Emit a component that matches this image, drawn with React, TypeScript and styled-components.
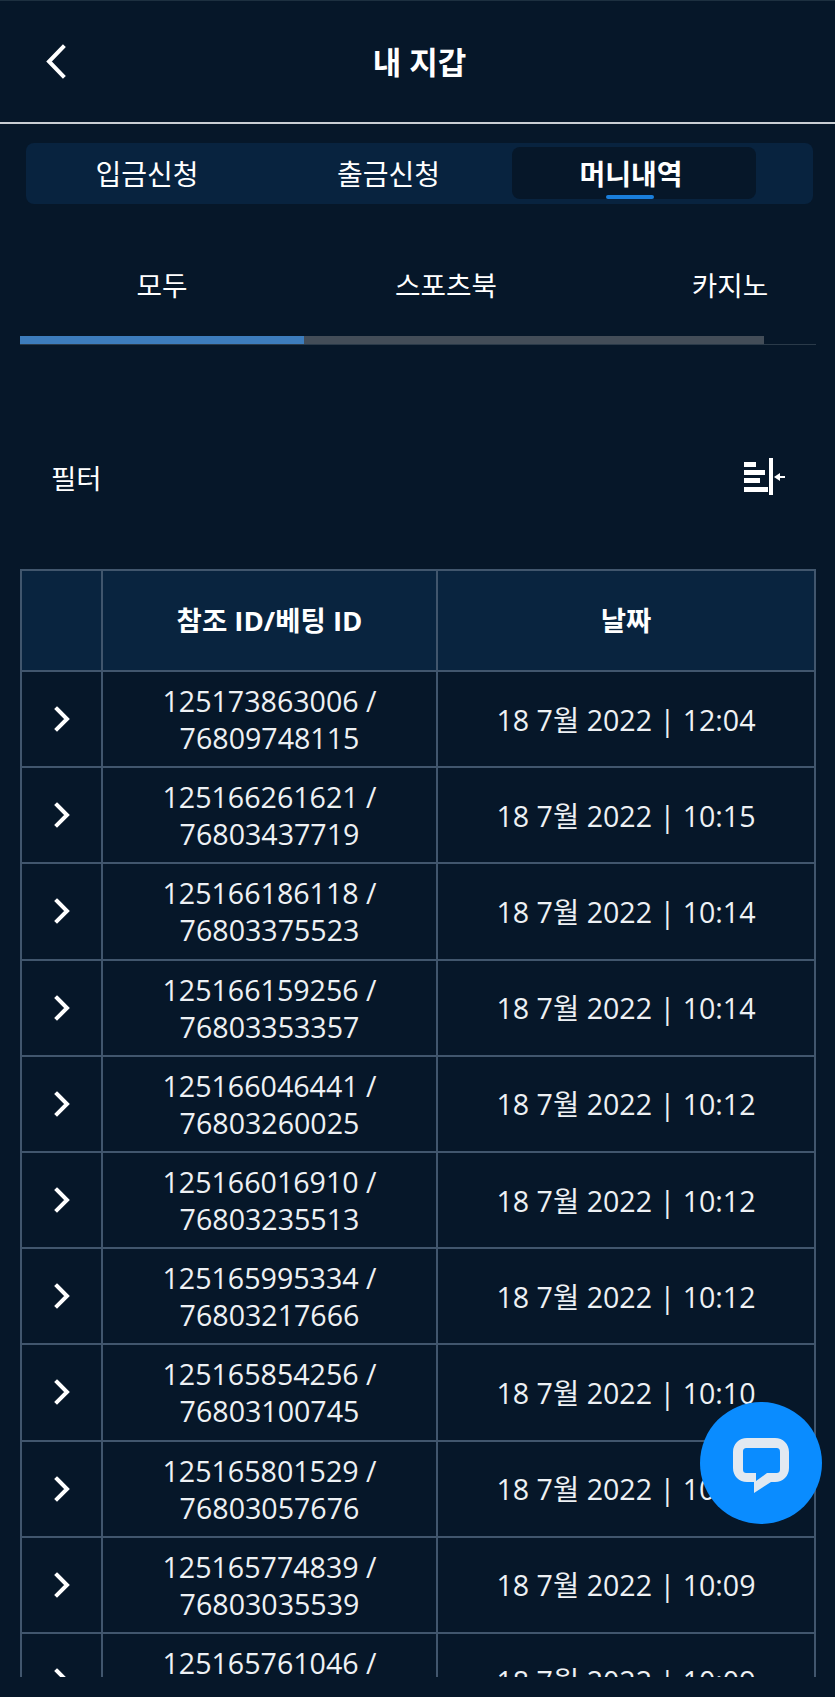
import React from "react";
import styled, { createGlobalStyle } from "styled-components";

const GlobalStyle = createGlobalStyle`
  html, body { margin: 0; padding: 0; background: #061729; }
  * { box-sizing: border-box; }
`;

const Page = styled.div`
  position: relative;
  width: 835px;
  height: 1697px;
  display: flex;
  flex-direction: column;
  overflow: hidden;
  background: #061729;
  color: #fff;
  font-family: "Open Sans", "Noto Sans CJK KR", sans-serif;
`;

const Header = styled.header`
  position: relative;
  flex: none;
  height: 124px;
  padding: 0 0 2px 4px;
  display: flex;
  align-items: center;
  justify-content: center;
  border-top: 1px solid #1d3040;
  border-bottom: 2px solid #c9ced3;
`;

const BackButton = styled.button`
  position: absolute;
  left: 44px;
  top: 42px;
  padding: 0;
  border: 0;
  background: none;
  color: #fff;
  display: flex;
`;

const Title = styled.h1`
  margin: 0;
  font-size: 31px;
  font-weight: 700;
`;

const TabBar = styled.nav`
  flex: none;
  margin: 19px 22px 0 26px;
  height: 61px;
  padding: 4px 0 5px 0;
  display: grid;
  grid-template-columns: 243px 243px 244px;
  background: #08233f;
  border-radius: 8px;
`;

const Tab = styled.div<{ $active?: boolean; $inset: number }>`
  position: relative;
  display: flex;
  align-items: center;
  justify-content: center;
  padding-right: ${(p) => p.$inset}px;
  font-size: 28px;
  font-weight: ${(p) => (p.$active ? 700 : 400)};
  background: ${(p) => (p.$active ? "#061729" : "transparent")};
  border-radius: 8px;
`;

const TabMark = styled.span`
  position: absolute;
  left: 94px;
  bottom: 0;
  width: 48px;
  height: 4px;
  background: #1a7fdc;
  border-radius: 2px;
`;

const SubTabs = styled.div`
  flex: none;
  margin: 38px 19px 0 20px;
  height: 103px;
  overflow: hidden;
  position: relative;
  border-bottom: 1px solid #2a3a49;
`;

const SubTabRow = styled.div`
  display: grid;
  grid-template-columns: repeat(3, 284px);
  width: 852px;
  height: 84px;
  align-items: center;
  justify-items: center;
  font-size: 27.7px;
`;

const Track = styled.div`
  width: 744px;
  height: 8px;
  margin-top: 10px;
  background: #434d58;
`;

const Thumb = styled.div`
  width: 284px;
  height: 8px;
  background: #3d7dbd;
`;

const FilterRow = styled.div`
  flex: none;
  height: 224px;
  padding: 39px 49px 0 51px;
  display: flex;
  align-items: center;
  justify-content: space-between;
  font-size: 27.5px;
`;

const TableClip = styled.div`
  flex: 1;
  margin: 0 19px 20px 20px;
  overflow: hidden;
`;

const Grid = styled.div`
  display: grid;
  grid-template-columns: 81px 335px 378px;
  border-top: 2px solid #41566d;
  border-left: 2px solid #41566d;
`;

const HeadCell = styled.div`
  height: 101px;
  padding-bottom: 3px;
  display: flex;
  align-items: center;
  justify-content: center;
  text-align: center;
  font-size: 27.5px;
  font-weight: 700;
  background: #09243f;
  border-right: 2px solid #41566d;
  border-bottom: 2px solid #41566d;
`;

const Cell = styled.div`
  height: 96.2px;
  display: flex;
  align-items: center;
  justify-content: center;
  text-align: center;
  font-size: 28.6px;
  line-height: 37px;
  white-space: nowrap;
  color: #eef1f4;
  border-right: 2px solid #41566d;
  border-bottom: 2px solid #41566d;
`;

const ChatBubble = styled.div`
  position: absolute;
  left: 700px;
  top: 1402px;
  width: 122px;
  height: 122px;
  padding: 36px 0 0 33px;
  border-radius: 50%;
  background: #0a8cff;
  display: flex;
`;

const rows = [
  ["125173863006", "76809748115", "12:04"],
  ["125166261621", "76803437719", "10:15"],
  ["125166186118", "76803375523", "10:14"],
  ["125166159256", "76803353357", "10:14"],
  ["125166046441", "76803260025", "10:12"],
  ["125166016910", "76803235513", "10:12"],
  ["125165995334", "76803217666", "10:12"],
  ["125165854256", "76803100745", "10:10"],
  ["125165801529", "76803057676", "10:10"],
  ["125165774839", "76803035539", "10:09"],
  ["125165761046", "76803024321", "10:09"],
];

const Chevron = ({ points }: { points: string }) => (
  <svg width="24" height="36" viewBox="0 0 24 36" fill="none">
    <polyline points={points} stroke="#fff" strokeWidth="4" strokeLinecap="square" />
  </svg>
);

const FilterIcon = () => (
  <svg width="42" height="37" viewBox="0 0 42 37" fill="#fff">
    <rect x="0" y="4" width="12" height="5" />
    <rect x="0" y="12" width="21" height="5" />
    <rect x="0" y="20" width="16" height="5" />
    <rect x="0" y="29" width="24" height="5" />
    <rect x="25" y="0" width="4" height="37" />
    <rect x="34" y="18" width="7" height="2" />
    <path d="M30 19l6-4v8z" />
  </svg>
);

const ChatIcon = () => (
  <svg width="56" height="55" viewBox="0 0 56 55">
    <path
      fill="#e2e9f1"
      d="M14 0h28c8 0 14 6 14 14v16c0 8-6 14-14 14H38L21 55V44h-7C6 44 0 38 0 30V14C0 6 6 0 14 0z"
    />
    <path
      fill="#0a8cff"
      d="M14 10h29c3 0 4 1 4 4v17c0 3-1 4-4 4H34L23 43v-8h-9c-3 0-4-1-4-4V14c0-3 1-4 4-4z"
    />
  </svg>
);

export default function App() {
  return (
    <Page>
      <GlobalStyle />
      <Header>
        <BackButton aria-label="back">
          <Chevron points="19,4 5,18.5 19,33" />
        </BackButton>
        <Title>내 지갑</Title>
      </Header>
      <TabBar>
        <Tab $inset={1}>입금신청</Tab>
        <Tab $inset={4}>출금신청</Tab>
        <Tab $active $inset={6}>
          머니내역
          <TabMark />
        </Tab>
      </TabBar>
      <SubTabs>
        <SubTabRow>
          <span>모두</span>
          <span>스포츠북</span>
          <span>카지노</span>
        </SubTabRow>
        <Track>
          <Thumb />
        </Track>
      </SubTabs>
      <FilterRow>
        <span>필터</span>
        <FilterIcon />
      </FilterRow>
      <TableClip>
        <Grid>
          <HeadCell />
          <HeadCell>참조 ID/베팅 ID</HeadCell>
          <HeadCell>날짜</HeadCell>
          {rows.map(([ref, bet, time]) => (
            <React.Fragment key={ref}>
              <Cell>
                <Chevron points="7,8 17,18 7,28" />
              </Cell>
              <Cell>
                <div>
                  {ref} /<br />
                  {bet}
                </div>
              </Cell>
              <Cell>18 7월 2022 | {time}</Cell>
            </React.Fragment>
          ))}
        </Grid>
      </TableClip>
      <ChatBubble>
        <ChatIcon />
      </ChatBubble>
    </Page>
  );
}
